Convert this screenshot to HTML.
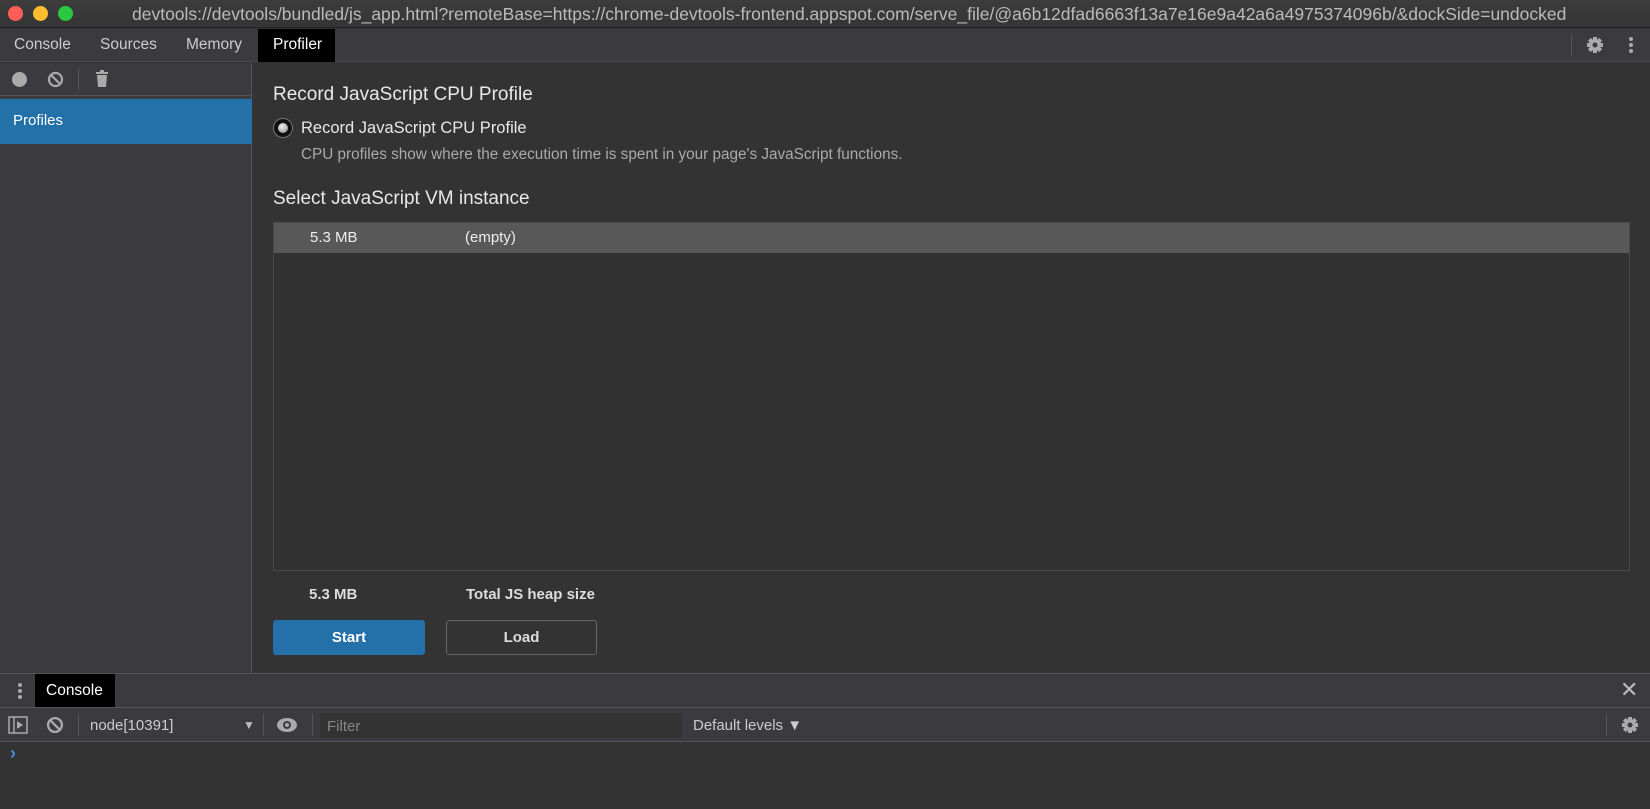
<!DOCTYPE html>
<html><head><style>
*{box-sizing:border-box;margin:0;padding:0}
body{width:1650px;height:809px;background:#333;font-family:"Liberation Sans",Arial,sans-serif;color:#ddd;position:relative;overflow:hidden}
.a{position:absolute}
.n{display:inline-block;white-space:nowrap}
</style></head><body>
<!-- title bar -->
<div class="a" style="left:0;top:0;width:1650px;height:28px;background:linear-gradient(#3c3c3c,#353535);border-bottom:1px solid #222"></div>
<div class="a" style="left:8px;top:6px;width:15px;height:15px;border-radius:50%;background:#fd5f57"></div>
<div class="a" style="left:33px;top:6px;width:15px;height:15px;border-radius:50%;background:#febc2e"></div>
<div class="a" style="left:58px;top:6px;width:15px;height:15px;border-radius:50%;background:#29c840"></div>
<div class="a" style="left:132px;top:4px;font-size:17.5px;color:#bbb"><span class="n">devtools://devtools/bundled/js_app.html?remoteBase=https://chrome-devtools-frontend.appspot.com/serve_file/@a6b12dfad6663f13a7e16e9a42a6a4975374096b/&amp;dockSide=undocked</span></div>
<!-- tabs -->
<div class="a" style="left:0;top:29px;width:1650px;height:33px;background:#3b3b3f;border-bottom:1px solid #4a4a4a"></div>
<div class="a" style="left:14px;top:36px;font-size:15.5px;color:#ccc"><span class="n">Console</span></div>
<div class="a" style="left:100px;top:36px;font-size:15.5px;color:#ccc"><span class="n">Sources</span></div>
<div class="a" style="left:186px;top:36px;font-size:15.5px;color:#ccc"><span class="n">Memory</span></div>
<div class="a" style="left:258px;top:29px;width:77px;height:33px;background:#000"></div>
<div class="a" style="left:273px;top:36px;font-size:15.5px;color:#fff"><span class="n">Profiler</span></div>
<div class="a" style="left:1571px;top:34px;width:1px;height:22px;background:#555"></div>
<svg class="a" style="left:1585px;top:35px" width="20" height="20" viewBox="0 0 20 20"><g fill="#aaa"><circle cx="10" cy="10" r="6"/><rect x="8" y="2" width="4" height="16"/><rect x="2" y="8" width="16" height="4"/><rect x="8" y="2" width="4" height="16" transform="rotate(45 10 10)"/><rect x="8" y="2" width="4" height="16" transform="rotate(-45 10 10)"/></g><circle cx="10" cy="10" r="2.5" fill="#3b3b3f"/></svg>
<div class="a" style="left:1629px;top:37px;width:4px;height:4px;border-radius:50%;background:#aaa;box-shadow:0 6px #aaa,0 12px #aaa"></div>
<!-- sidebar -->
<div class="a" style="left:0;top:63px;width:252px;height:610px;background:#3b3b3f;border-right:1px solid #555"></div>
<div class="a" style="left:0;top:63px;width:252px;height:33px;border-bottom:1px solid #555"></div>
<div class="a" style="left:12px;top:72px;width:15px;height:15px;border-radius:50%;background:#aaa"></div>
<svg class="a" style="left:47px;top:71px" width="17" height="17" viewBox="0 0 17 17"><circle cx="8.5" cy="8.5" r="6.5" fill="none" stroke="#aaa" stroke-width="2.2"/><line x1="4" y1="4" x2="13" y2="13" stroke="#aaa" stroke-width="2.2"/></svg>
<div class="a" style="left:78px;top:68px;width:1px;height:22px;background:#555"></div>
<svg class="a" style="left:95px;top:70px" width="14" height="18" viewBox="0 0 14 18"><rect x="1" y="2" width="12" height="2" fill="#aaa"/><rect x="5" y="0" width="4" height="3" fill="#aaa"/><path d="M2 5h10l-1 12H3z" fill="#aaa"/></svg>
<div class="a" style="left:0;top:99px;width:252px;height:45px;background:#2470a8"></div>
<div class="a" style="left:13px;top:112px;font-size:15px;color:#fff"><span class="n">Profiles</span></div>
<!-- main -->
<div class="a" style="left:273px;top:84px;font-size:19px;color:#e8e8e8"><span class="n">Record JavaScript CPU Profile</span></div>
<div class="a" style="left:273px;top:118px;width:20px;height:20px;border-radius:50%;background:#111;border:1px solid #777"></div>
<div class="a" style="left:278px;top:123px;width:10px;height:10px;border-radius:50%;background:radial-gradient(circle at 40% 35%,#eee,#888)"></div>
<div class="a" style="left:301px;top:119px;font-size:16.5px;color:#e8e8e8"><span class="n">Record JavaScript CPU Profile</span></div>
<div class="a" style="left:301px;top:146px;font-size:15.3px;color:#aaa"><span class="n">CPU profiles show where the execution time is spent in your page's JavaScript functions.</span></div>
<div class="a" style="left:273px;top:188px;font-size:19px;color:#e8e8e8"><span class="n">Select JavaScript VM instance</span></div>
<div class="a" style="left:273px;top:222px;width:1357px;height:349px;border:1px solid #4a4a4a;background:#323232"></div>
<div class="a" style="left:274px;top:223px;width:1355px;height:30px;background:#585858"></div>
<div class="a" style="left:310px;top:229px;font-size:15px;color:#eee"><span class="n">5.3 MB</span></div>
<div class="a" style="left:465px;top:229px;font-size:15px;color:#eee"><span class="n">(empty)</span></div>
<div class="a" style="left:309px;top:586px;font-size:15px;font-weight:bold;color:#ddd"><span class="n">5.3 MB</span></div>
<div class="a" style="left:466px;top:586px;font-size:15px;font-weight:bold;color:#ddd"><span class="n">Total JS heap size</span></div>
<div class="a" style="left:273px;top:620px;width:152px;height:35px;border-radius:3px;background:#2470a8;text-align:center;line-height:35px;font-size:15px;font-weight:bold;color:#fff">Start</div>
<div class="a" style="left:446px;top:620px;width:151px;height:35px;border-radius:3px;border:1px solid #666;text-align:center;line-height:33px;font-size:15px;font-weight:bold;color:#ddd">Load</div>
<!-- drawer -->
<div class="a" style="left:0;top:673px;width:1650px;height:35px;background:#3b3b3f;border-top:1px solid #555;border-bottom:1px solid #555"></div>
<div class="a" style="left:18px;top:683px;width:4px;height:4px;border-radius:50%;background:#aaa;box-shadow:0 6px #aaa,0 12px #aaa"></div>
<div class="a" style="left:35px;top:674px;width:80px;height:33px;background:#000"></div>
<div class="a" style="left:46px;top:682px;font-size:15.5px;color:#fff"><span class="n">Console</span></div>
<div class="a" style="left:1620px;top:679px;font-size:22px;color:#bbb;line-height:22px">✕</div>
<div class="a" style="left:0;top:708px;width:1650px;height:34px;background:#3b3b3f;border-bottom:1px solid #555"></div>
<svg class="a" style="left:8px;top:716px" width="20" height="18" viewBox="0 0 20 18"><rect x="1" y="1" width="18" height="16" fill="none" stroke="#aaa" stroke-width="1.5"/><line x1="6" y1="1" x2="6" y2="17" stroke="#aaa" stroke-width="1.5"/><path d="M9 5l6 4-6 4z" fill="#aaa"/></svg>
<svg class="a" style="left:46px;top:716px" width="18" height="18" viewBox="0 0 17 17"><circle cx="8.5" cy="8.5" r="6.5" fill="none" stroke="#aaa" stroke-width="2.2"/><line x1="4" y1="4" x2="13" y2="13" stroke="#aaa" stroke-width="2.2"/></svg>
<div class="a" style="left:78px;top:714px;width:1px;height:22px;background:#555"></div>
<div class="a" style="left:90px;top:717px;font-size:15px;color:#ccc"><span class="n">node[10391]</span></div>
<div class="a" style="left:243px;top:718px;font-size:12px;color:#bbb">▼</div>
<div class="a" style="left:263px;top:714px;width:1px;height:22px;background:#555"></div>
<svg class="a" style="left:276px;top:716px" width="22" height="18" viewBox="0 0 22 18"><ellipse cx="11" cy="9" rx="10" ry="7" fill="#aaa"/><circle cx="11" cy="9" r="4" fill="#3b3b3f"/><circle cx="11" cy="9" r="2" fill="#aaa"/></svg>
<div class="a" style="left:312px;top:714px;width:1px;height:22px;background:#555"></div>
<div class="a" style="left:320px;top:713px;width:362px;height:25px;background:#333"></div>
<div class="a" style="left:327px;top:718px;font-size:15px;color:#888"><span class="n">Filter</span></div>
<div class="a" style="left:693px;top:717px;font-size:15px;color:#ccc"><span class="n">Default levels ▼</span></div>
<div class="a" style="left:1606px;top:714px;width:1px;height:22px;background:#555"></div>
<svg class="a" style="left:1620px;top:715px" width="20" height="20" viewBox="0 0 20 20"><g fill="#aaa"><circle cx="10" cy="10" r="6"/><rect x="8" y="2" width="4" height="16"/><rect x="2" y="8" width="16" height="4"/><rect x="8" y="2" width="4" height="16" transform="rotate(45 10 10)"/><rect x="8" y="2" width="4" height="16" transform="rotate(-45 10 10)"/></g><circle cx="10" cy="10" r="2.5" fill="#3b3b3f"/></svg>
<div class="a" style="left:10px;top:743px;font-size:18px;color:#4a90e2;font-weight:bold">›</div>
</body></html>
